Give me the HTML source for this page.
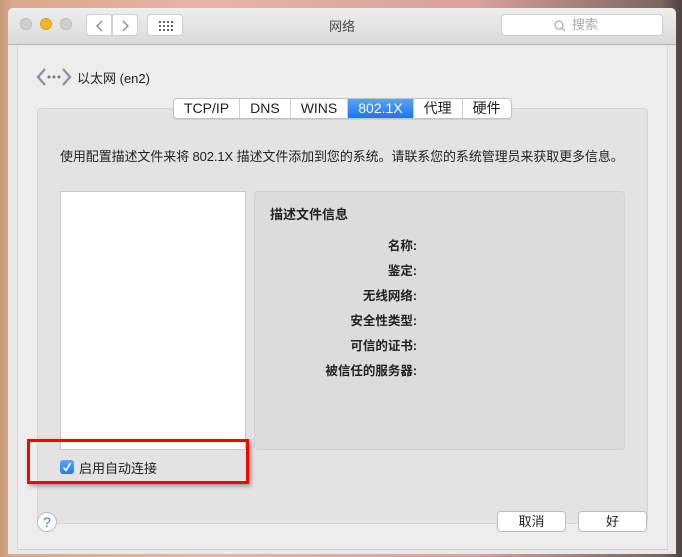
<!DOCTYPE html>
<html><head><meta charset="utf-8"><style>
*{margin:0;padding:0;box-sizing:border-box}
body{width:682px;height:557px;overflow:hidden;position:relative;font-family:"Liberation Sans","Noto Sans CJK SC",sans-serif;font-size:12px;color:#222;
background:linear-gradient(90deg,#c9987a 0,#d9a98c 2%,#e6b5a4 30%,#d8a19a 70%,#7a6660 97%,#4a4444 100%)}
.a{position:absolute}
.win{left:8px;top:8px;width:668px;height:546px;background:#e9e9e9;border-radius:5px 5px 0 0;overflow:hidden}
.tb{left:0;top:0;width:668px;height:37px;background:linear-gradient(#eeeeee,#dadada);border-bottom:1px solid #b5b5b5}
.dot{width:12px;height:12px;border-radius:50%;top:10px}
.btn{background:#fff;border:1px solid #d0d0d0;border-radius:4px}
.sheet{left:9px;top:37px;width:651px;height:505px;background:#ededed;border-left:1px solid #d8d8d8;border-right:1px solid #d8d8d8;border-bottom:1px solid #ccc}
.grp{left:37px;top:108px;width:611px;height:416px;background:#e3e3e3;border:1px solid #d4d4d4;border-radius:4px}
.tabs{left:173px;top:98px;height:21px;display:flex;background:#fff;border:1px solid #c2c2c2;border-radius:4px;overflow:hidden;box-shadow:0 1px 1px rgba(0,0,0,.1)}
.tabs div{padding:0 10px;line-height:19px;font-size:14px;border-right:1px solid #d0d0d0}
.tabs .s{background:#3b8df9;background:linear-gradient(#5aa2fc,#1a74f5);color:#fff}
.pb{border:1px solid #bdbdbd;border-radius:4px;background:#fff;width:69px;height:21px;text-align:center;line-height:19px;font-size:13px;top:511px}
</style></head><body>
<div class="a win">
 <div class="a tb">
  <div class="a dot" style="left:12px;background:#d0d0d0;border:1px solid #bcbcbc"></div>
  <div class="a dot" style="left:32px;background:#f6b72c;border:1px solid #dd9f1a"></div>
  <div class="a dot" style="left:52px;background:#d0d0d0;border:1px solid #bcbcbc"></div>
  <div class="a btn" style="left:78px;top:6px;width:26px;height:22px;border-radius:4px 0 0 4px"><svg width="26" height="22"><path d="M15 6 L10 11 L15 16" stroke="#888" stroke-width="1.3" fill="none"/></svg></div>
  <div class="a btn" style="left:104px;top:6px;width:26px;height:22px;border-radius:0 4px 4px 0"><svg width="26" height="22"><path d="M10 6 L15 11 L10 16" stroke="#888" stroke-width="1.3" fill="none"/></svg></div>
  <div class="a btn" style="left:139px;top:6px;width:36px;height:22px"><svg width="36" height="22"><g fill="#666"><rect x="11" y="6" width="2" height="2"/><rect x="15" y="6" width="2" height="2"/><rect x="19" y="6" width="2" height="2"/><rect x="23" y="6" width="2" height="2"/><rect x="11" y="10" width="2" height="2"/><rect x="15" y="10" width="2" height="2"/><rect x="19" y="10" width="2" height="2"/><rect x="23" y="10" width="2" height="2"/><rect x="11" y="14" width="2" height="2"/><rect x="15" y="14" width="2" height="2"/><rect x="19" y="14" width="2" height="2"/><rect x="23" y="14" width="2" height="2"/></g></svg></div>
  <div class="a" style="left:0;width:668px;top:8px;text-align:center;font-size:13px;color:#4a4a4a">网络</div>
  <div class="a btn" style="left:493px;top:6px;width:162px;height:22px;color:#aaa;font-size:13px;line-height:20px;padding-left:50px"><svg width="12" height="12" style="position:absolute;left:52px;top:5px"><circle cx="5" cy="5" r="4" stroke="#999" fill="none"/><path d="M8 8 L11 11" stroke="#999"/></svg><span style="margin-left:20px">搜索</span></div>
 </div>
 <div class="a sheet"></div>
</div>
<svg class="a" style="left:36px;top:66px" width="36" height="22"><path d="M9 3 L2 11 L9 19 M27 3 L34 11 L27 19" stroke="#8a8f9a" stroke-width="2.2" fill="none"/><circle cx="13" cy="11" r="1.5" fill="#777"/><circle cx="18" cy="11" r="1.5" fill="#777"/><circle cx="23" cy="11" r="1.5" fill="#777"/></svg>
<div class="a" style="left:77px;top:68px;font-size:13px">以太网 (en2)</div>
<div class="a grp"></div>
<div class="a tabs"><div>TCP/IP</div><div>DNS</div><div>WINS</div><div class="s">802.1X</div><div>代理</div><div style="border:0">硬件</div></div>
<div class="a" style="left:60px;top:146px;font-size:13px;white-space:nowrap;letter-spacing:-0.1px">使用配置描述文件来将 802.1X 描述文件添加到您的系统。请联系您的系统管理员来获取更多信息。</div>
<div class="a" style="left:60px;top:191px;width:186px;height:259px;background:#fff;border:1px solid #c8c8c8"></div>
<div class="a" style="left:254px;top:191px;width:371px;height:259px;background:#dcdcdc;border:1px solid #d2d2d2;border-radius:4px">
 <div class="a" style="left:15px;top:12px;font-size:13px;font-weight:bold">描述文件信息</div>
 <div class="a" style="left:0;top:42px;width:162px;text-align:right;font-weight:bold;line-height:25px;font-size:12.5px">名称:<br>鉴定:<br>无线网络:<br>安全性类型:<br>可信的证书:<br>被信任的服务器:</div>
</div>
<div class="a" style="left:60px;top:460px;width:14px;height:14px;border-radius:3px;background:linear-gradient(#5ba6fc,#1f7af5)"><svg width="14" height="14"><path d="M3.5 7.5 L6 10.5 L10.5 3" stroke="#fff" stroke-width="1.6" fill="none"/></svg></div>
<div class="a" style="left:79px;top:458px;font-size:13px">启用自动连接</div>
<div class="a" style="left:27px;top:439px;width:222px;height:45px;border:3px solid #f00;box-shadow:2px 2px 4px rgba(0,0,0,.35)"></div>
<div class="a" style="left:37px;top:512px;width:20px;height:20px;border-radius:50%;background:#fff;border:1px solid #bbb;text-align:center;line-height:18px;color:#2a7cf5;font-size:14px">?</div>
<div class="a pb" style="left:497px">取消</div>
<div class="a pb" style="left:578px">好</div>
</body></html>
